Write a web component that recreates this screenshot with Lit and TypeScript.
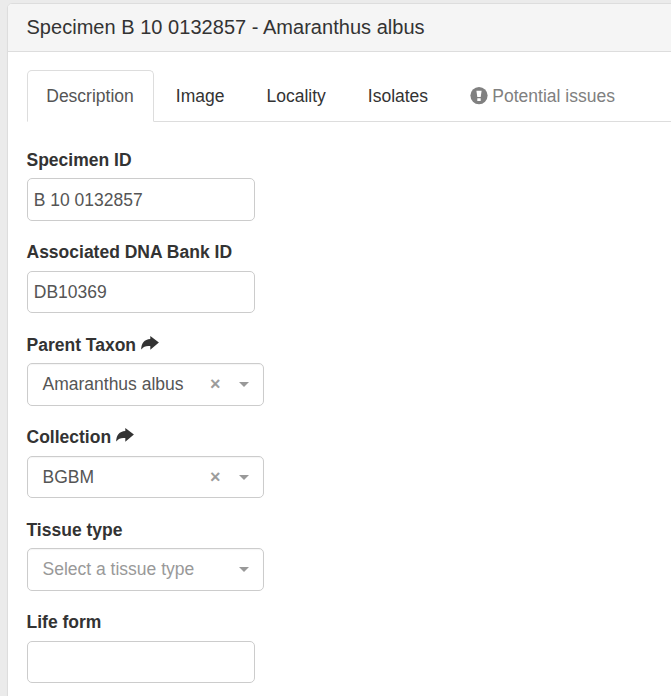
import { LitElement, html, css, nothing } from "lit";
import { customElement, property } from "lit/decorators.js";

const shareIcon = html`<svg class="share" width="18" height="14" viewBox="0 0 18 14">
  <path d="M9.3 0 L17.9 6.6 L9.3 13.8 V10 C5.4 9.6 2.6 10.2 0.6 13.2 H0.2 C0.2 7.2 3.4 3.3 9.3 2.9 Z" fill="currentColor" />
</svg>`;

const warningIcon = html`<svg class="warning" width="18" height="18" viewBox="0 0 18 18">
  <circle cx="9" cy="8.6" r="8.6" fill="currentColor" />
  <path d="M6.4 3.8 H11.6 L10.7 9.9 H7.3 Z M7.3 11.2 H10.7 V13.9 H7.3 Z" fill="#fff" />
</svg>`;

@customElement("form-field")
class FormField extends LitElement {
  @property() label = "";
  @property() value = "";
  @property() placeholder = "";
  @property({ type: Boolean }) linked = false;
  @property({ type: Boolean }) select = false;

  static styles = css`
    :host { display: block; margin-bottom: 19.25px; }
    .label { height: 25px; margin: 0 0 5.75px -0.25px; font-weight: 700; color: #333; white-space: nowrap; }
    .share { margin-left: 5px; vertical-align: 0.75px; }
    .box {
      box-sizing: border-box;
      display: flex;
      align-items: center;
      height: 42.5px;
      border: 1px solid #ccc;
      border-radius: 5px;
      background: #fff;
      color: #555;
    }
    .input { width: 228px; padding: 1px 6px 0; }
    .picker { width: 237px; padding: 0 14px 0 14.75px; box-shadow: inset 0 1px 1px rgba(0, 0, 0, 0.04); }
    .text { flex: 1; white-space: nowrap; }
    .empty { color: #999; }
    .clear { width: 14px; margin-right: 16.5px; text-align: center; font-size: 18px; line-height: 25px; color: #999; -webkit-text-stroke: 0.6px #999; }
    .arrow { border: 5px solid transparent; border-top-color: #999; border-bottom: 0; }
  `;

  render() {
    return html`
      <div class="label">${this.label}${this.linked ? shareIcon : nothing}</div>
      ${this.select
        ? html`<div class="box picker">
            <span class="text ${this.value ? "" : "empty"}">${this.value || this.placeholder}</span>
            ${this.value ? html`<span class="clear">×</span>` : nothing}
            <span class="arrow"></span>
          </div>`
        : html`<div class="box input">${this.value}</div>`}
    `;
  }
}

@customElement("app-root")
class AppRoot extends LitElement {
  static styles = css`
    :host {
      display: block;
      box-sizing: border-box;
      height: 696px;
      overflow: hidden;
      padding: 3px 0 0 7px;
      background: #ebebeb;
      font: 17.5px/25px "Liberation Sans", Arial, sans-serif;
      color: #333;
    }
    .panel {
      box-sizing: border-box;
      width: 700px;
      min-height: 740px;
      background: #fff;
      border: 1px solid #ddd;
      border-radius: 5px;
      box-shadow: 0 1px 1px rgba(0, 0, 0, 0.05);
    }
    .heading {
      padding: 12px 18.5px 13px;
      font-size: 20px;
      letter-spacing: 0.03px;
      line-height: 22px;
      background: #f5f5f5;
      border-bottom: 1px solid #ddd;
      border-radius: 4px 4px 0 0;
    }
    .body { padding: 18px 0 0 18.75px; }
    .tabs { display: flex; border-bottom: 1px solid #ddd; margin-bottom: 25.5px; }
    .tab {
      margin: 0 2.5px -1px 0;
      padding: 12.5px 19px 12.5px 18.5px;
      border: 1px solid transparent;
      border-radius: 5px 5px 0 0;
      white-space: nowrap;
    }
    .active { color: #555; background: #fff; border-color: #ddd #ddd #fff; }
    .muted { color: #808080; }
    .warning { margin-right: 4.25px; vertical-align: -3px; }
  `;

  render() {
    return html`<div class="panel">
      <div class="heading">Specimen B 10 0132857 - Amaranthus albus</div>
      <div class="body">
        <div class="tabs">
          <div class="tab active">Description</div>
          <div class="tab">Image</div>
          <div class="tab">Locality</div>
          <div class="tab">Isolates</div>
          <div class="tab muted">${warningIcon}Potential issues</div>
        </div>
        <form-field label="Specimen ID" value="B 10 0132857"></form-field>
        <form-field label="Associated DNA Bank ID" value="DB10369"></form-field>
        <form-field label="Parent Taxon" value="Amaranthus albus" linked select></form-field>
        <form-field label="Collection" value="BGBM" linked select></form-field>
        <form-field label="Tissue type" placeholder="Select a tissue type" select></form-field>
        <form-field label="Life form"></form-field>
      </div>
    </div>`;
  }
}
